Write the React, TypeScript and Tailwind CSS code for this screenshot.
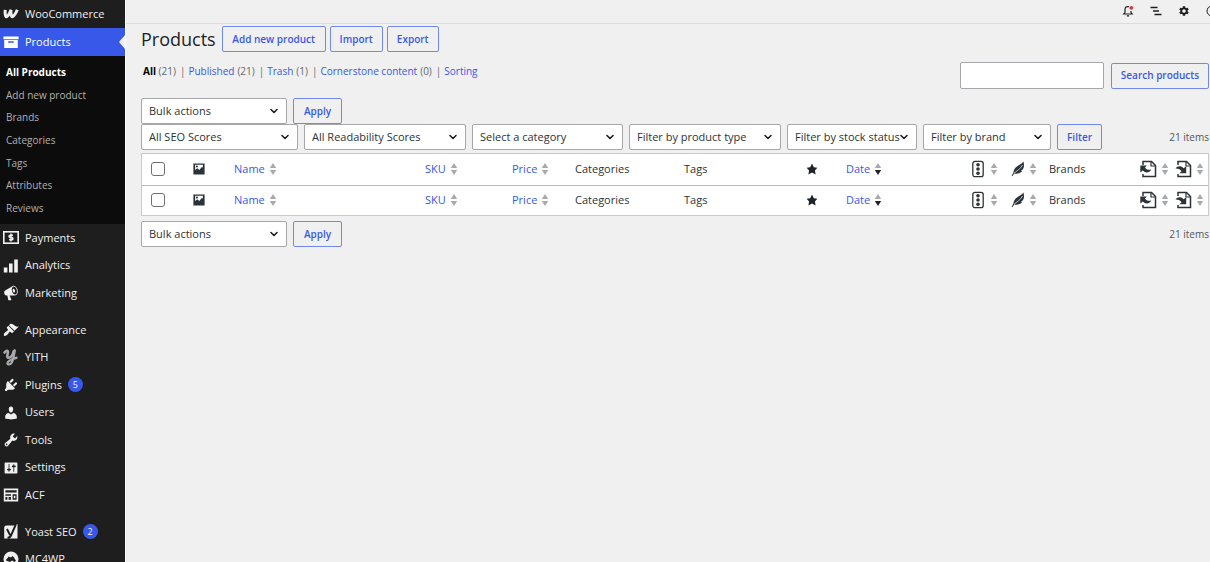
import { useState, type ReactNode } from "react";
import { ChevronDown } from "lucide-react";
import { MdSettings } from "react-icons/md";

type MenuItem = { label: string; icon: ReactNode; badge?: number };

function Dash({ d, size = "size-4" }: { d: string; size?: string }) {
  return (
    <svg viewBox="0 0 20 20" fill="currentColor" className={size} aria-hidden="true">
      <path d={d} fillRule="evenodd" />
    </svg>
  );
}

const ICONS = {
  archive: "M19.500 3v3.500H.5V3zM1.500 7.500h17V17.500h-17zM13.500 11V9h-7v2z",
  chart: "M1 12h4.500v6H1zM7.500 7H12v11H7.500zM14 2h4.500v16H14z",
  megaphone:
    "M18.15 5.94c.46 1.62.38 3.22-.02 4.48-.42 1.28-1.26 2.18-2.3 2.48-.16.06-.26.06-.4.06-.06.02-.12.02-.18.02-.06.02-.14.02-.22.02h-6.8l2.22 5.5c.02.14-.06.26-.14.34-.08.1-.24.16-.34.16H6.95c-.1 0-.26-.06-.34-.16-.08-.08-.16-.2-.14-.34l-1-5.5H4.25l-.02-.02c-.5.06-1.08-.18-1.54-.62s-.88-1.08-1.06-1.88c-.24-.8-.2-1.56-.02-2.2.18-.62.58-1.08 1.06-1.3l.02-.02 9-5.4c.1-.06.18-.1.24-.16.06-.04.14-.08.24-.12.16-.08.28-.12.5-.18 1.04-.3 2.24.1 3.22.98s1.84 2.24 2.26 3.86zm-2.58 5.98h-.02c.4-.1.74-.34 1.04-.7.58-.7.86-1.76.86-3.04 0-.64-.1-1.3-.28-1.98-.34-1.36-1.02-2.5-1.78-3.24s-1.68-1.1-2.46-.88c-.82.22-1.4.96-1.7 2-.32 1.04-.28 2.36.06 3.72.38 1.36 1 2.5 1.8 3.24.78.74 1.62 1.1 2.48.88zm-2.54-7.08c.22-.04.42-.02.62.04.38.16.76.48 1.02 1s.42 1.2.42 1.78c0 .3-.04.56-.12.8-.18.48-.44.84-.86.94-.34.1-.8-.06-1.14-.4s-.64-.86-.78-1.5c-.18-.62-.12-1.24.02-1.72s.48-.84.82-.94z",
  appearance:
    "M14.48 11.06L7.41 3.99l1.5-1.5c.5-.56 2.3-.47 3.51.32 1.21.8 1.43 1.28 2.91 2.1 1.18.64 2.45 1.26 4.45.85zm-.71.71L6.7 4.7 4.93 6.47c-.39.39-.39 1.02 0 1.41l1.06 1.06c.39.39.39 1.03 0 1.42-.6.6-1.43 1.11-2.21 1.69-.35.26-.7.53-1.01.84C1.43 14.23.4 16.08 1.4 17.07c.99 1 2.84-.03 4.18-1.36.31-.31.58-.66.85-1.02.57-.78 1.08-1.61 1.69-2.21.39-.39 1.02-.39 1.41 0l1.06 1.06c.39.39 1.02.39 1.41 0z",
  plugins:
    "M13.11 4.36L9.87 7.6 8 5.73l3.24-3.24c.35-.34 1.05-.2 1.56.32.52.51.66 1.21.31 1.55zm-8 1.77l.91-1.12 9.01 9.01-1.19.84c-.71.71-2.63 1.16-3.82 1.16H6.14L4.9 17.26c-.59.59-1.54.59-2.12 0-.59-.58-.59-1.53 0-2.12l1.24-1.24v-3.88c0-1.13.4-3.19 1.09-3.89zm7.26 3.97l3.24-3.24c.34-.35 1.04-.21 1.55.31.52.51.66 1.21.31 1.55l-3.24 3.25z",
  users:
    "M10 9.25c-2.27 0-2.73-3.44-2.73-3.44C7 4.02 7.82 2 9.97 2c2.16 0 2.98 2.02 2.71 3.81 0 0-.41 3.44-2.68 3.44zm0 2.57L12.72 10c2.39 0 4.52 2.33 4.52 4.53v2.49s-3.65 1.13-7.24 1.13c-3.65 0-7.24-1.13-7.24-1.13v-2.49c0-2.25 1.94-4.48 4.47-4.48z",
  tools:
    "M16.68 9.77c-1.34 1.34-3.3 1.67-4.95.99l-5.41 6.52c-.99.99-2.59.99-3.58 0s-.99-2.59 0-3.57l6.52-5.42c-.68-1.65-.35-3.61.99-4.95 1.28-1.28 3.12-1.62 4.72-1.06l-2.89 2.89 2.82 2.82 2.86-2.87c.53 1.58.18 3.39-1.08 4.65zM3.81 16.21c.4.39 1.04.39 1.43 0 .4-.4.4-1.04 0-1.43-.39-.4-1.03-.4-1.43 0-.39.39-.39 1.03 0 1.43z",
  settings:
    "M18 16V4c0-.55-.45-1-1-1H3c-.55 0-1 .45-1 1v12c0 .55.45 1 1 1h14c.55 0 1-.45 1-1zM8 11h1c.55 0 1 .45 1 1s-.45 1-1 1H8v1.5c0 .28-.22.5-.5.5s-.5-.22-.5-.5V13H6c-.55 0-1-.45-1-1s.45-1 1-1h1V5.5c0-.28.22-.5.5-.5s.5.22.5.5V11zm5-2h-1c-.55 0-1-.45-1-1s.45-1 1-1h1V5.5c0-.28.22-.5.5-.5s.5.22.5.5V7h1c.55 0 1 .45 1 1s-.45 1-1 1h-1v5.5c0 .28-.22.5-.5.5s-.5-.22-.5-.5V9z",
  acf: "M1 2h18v16H1zM3 4v3h14V4zM3 9v2h7V9zM3 12.500v3.500h2.500v-3.500zM7 12.500v3.500h3v-3.500zM12 9v7h5V9zM13.500 11h2v3h-2z",
  star: "M10 1l3 6 6 .75-4.12 4.62L16 19l-6-3-6 3 1.13-6.63L1 7.75 7 7z",
  image: "M2 2h16v16H2zM4.500 4v7.500l3-2.500 3 2.500 3.500-4.500 1.500 1V4zM7 5a1.500 1.500 0 1 1 0 3 1.500 1.500 0 0 1 0-3z",
};

function WooIcon() {
  return (
    <svg viewBox="0 0 16 12" className="h-3 w-4" fill="none" stroke="currentColor" strokeWidth="3" strokeLinejoin="bevel" aria-hidden="true">
      <path d="M2.200 1.800 C1.900 5.500 2.400 8 3.300 9 C5 8.200 6.800 5 8 1.800 C7.700 5.500 8.200 8 9.200 9 C11 8 13 5 14.300 1.800" />
    </svg>
  );
}

function DollarIcon() {
  return (
    <svg viewBox="0 0 16 13" className="h-[13px] w-4" aria-hidden="true">
      <rect x="0.800" y="0.800" width="14.400" height="11.400" fill="none" stroke="currentColor" strokeWidth="1.600" />
      <path d="M10 4.200H7.200a1.150 1.150 0 0 0 0 2.300h1.600a1.150 1.150 0 0 1 0 2.300H6M8 2.600v7.800" fill="none" stroke="currentColor" strokeWidth="1.500" />
    </svg>
  );
}

function YithIcon() {
  return (
    <svg viewBox="0 0 16 18" className="h-[18px] w-4 text-[#a7aaad]" fill="none" stroke="currentColor" strokeLinecap="round" aria-hidden="true">
      <path d="M1.500 4.500C3.500 2 5.500 2.200 4.800 5C4 8.300 4 10 6 9.800C8.300 9.500 10 6 10.800 3" strokeWidth="2.600" />
      <path d="M11.800 2.500C11 7 10.200 12 8.800 14.500C7.600 16.800 4.200 17 4.500 14.800C4.800 12.700 8.500 11.500 13.500 9.800" strokeWidth="2.300" />
    </svg>
  );
}

function YoastIcon() {
  return (
    <svg viewBox="0 0 16 16" className="size-4" aria-hidden="true">
      <path d="M3.500 1.500H12L14.500 0 14.500 14.500H1.200V3.800Q1.200 1.500 3.500 1.500z" fill="currentColor" />
      <path d="M4 5l3 6M12.800 0.500L8 11.500Q7 13.800 4.500 13.800" fill="none" stroke="#1e1e1e" strokeWidth="1.900" />
    </svg>
  );
}

function McIcon() {
  return (
    <svg viewBox="0 0 16 16" className="size-4" aria-hidden="true">
      <circle cx="8" cy="8" r="7.500" fill="currentColor" />
      <path d="M3 9.500C3 7.500 5 7.500 5.500 5.500L8 6.500 9.500 5C11.500 6 11 8 13 9.500L11.500 11 9 9.500 7 11z" fill="#1e1e1e" />
    </svg>
  );
}

const MENU_STORE: MenuItem[] = [
  { label: "Payments", icon: <DollarIcon /> },
  { label: "Analytics", icon: <Dash d={ICONS.chart} /> },
  { label: "Marketing", icon: <Dash d={ICONS.megaphone} /> },
];

const MENU_SITE: MenuItem[] = [
  { label: "Appearance", icon: <Dash d={ICONS.appearance} /> },
  { label: "YITH", icon: <YithIcon /> },
  { label: "Plugins", icon: <Dash d={ICONS.plugins} />, badge: 5 },
  { label: "Users", icon: <Dash d={ICONS.users} /> },
  { label: "Tools", icon: <Dash d={ICONS.tools} /> },
  { label: "Settings", icon: <Dash d={ICONS.settings} /> },
  { label: "ACF", icon: <Dash d={ICONS.acf} /> },
];

const MENU_EXTRA: MenuItem[] = [
  { label: "Yoast SEO", icon: <YoastIcon />, badge: 2 },
  { label: "MC4WP", icon: <McIcon /> },
];

const SUBMENU = ["All Products", "Add new product", "Brands", "Categories", "Tags", "Attributes", "Reviews"];

const VIEWS = [
  { label: "Published", count: 21 },
  { label: "Trash", count: 1 },
  { label: "Cornerstone content", count: 0 },
];

function MenuGroup({ items, className }: { items: MenuItem[]; className: string }) {
  return (
    <ul className={`flex flex-col ${className}`}>
      {items.map((m) => (
        <li key={m.label} className="flex flex-1">
          <a href="#" className="flex flex-1 items-center gap-1.5 pl-[3px]">
            <span className="flex w-4 shrink-0 justify-center">{m.icon}</span>
            <span>{m.label}</span>
            {m.badge && (
              <span className="flex size-[15px] items-center justify-center rounded-full bg-[#3858e9] text-[9px]">{m.badge}</span>
            )}
          </a>
        </li>
      ))}
    </ul>
  );
}

function Sidebar() {
  return (
    <nav className="w-[125px] shrink-0 overflow-hidden bg-[#1e1e1e] text-[11px] text-[#f0f0f1]" aria-label="Main menu">
      <a href="#" className="flex h-7 items-center gap-1.5 pl-[3px]">
        <WooIcon />
        WooCommerce
      </a>
      <a href="#" className="relative flex h-7 items-center gap-1.5 bg-[#3858e9] pl-[3px] text-white">
        <Dash d={ICONS.archive} />
        Products
        <svg viewBox="0 0 6 14" className="absolute right-0 h-3.5 w-1.5 fill-[#f0f0f0]" aria-hidden="true">
          <path d="M6 0v14L0 7z" />
        </svg>
      </a>
      <ul className="flex h-[168px] flex-col bg-[#0c0c0c] pt-[5px] pb-1 text-[10px] text-[#b0b0b1]">
        {SUBMENU.map((s, i) => (
          <li key={s} className="flex flex-1">
            <a href="#" className={i === 0 ? "flex flex-1 items-center pl-1.5 font-bold text-white" : "flex flex-1 items-center pl-1.5"}>
              {s}
            </a>
          </li>
        ))}
      </ul>
      <MenuGroup items={MENU_STORE} className="h-[83px]" />
      <MenuGroup items={MENU_SITE} className="mt-[9px] h-[193px]" />
      <MenuGroup items={MENU_EXTRA} className="mt-[9px] h-[55px]" />
    </nav>
  );
}

function Button({ children, className = "" }: { children: ReactNode; className?: string }) {
  return (
    <button
      type="button"
      className={`h-[26px] shrink-0 rounded-[2px] border border-[#7189ee] text-[10px] font-semibold text-[#3858e9] ${className}`}
    >
      {children}
    </button>
  );
}

function Select({ label, className }: { label: string; className: string }) {
  return (
    <div className={`relative shrink-0 ${className}`}>
      <select
        aria-label={label}
        className="h-[26px] w-full appearance-none rounded-[2px] border border-[#a5a7aa] bg-white pl-[7px] text-[11px] text-[#2c3338]"
      >
        <option>{label}</option>
      </select>
      <ChevronDown className="pointer-events-none absolute top-[7px] right-[7px] size-3 text-[#1e1e1e]" strokeWidth={3.2} />
    </div>
  );
}

function Sorter({ active = false }: { active?: boolean }) {
  return (
    <svg viewBox="0 0 8 12" className="h-3 w-2 shrink-0" aria-hidden="true">
      <path d="M4 0l3.200 5H0.800z" fill="#a7aaad" />
      <path d="M4 12l3.200-5H0.800z" fill={active ? "#1d2327" : "#a7aaad"} />
    </svg>
  );
}

function SortLink({ children, label, active }: { children: ReactNode; label?: string; active?: boolean }) {
  return (
    <a href="#" aria-label={label} className="flex items-center gap-1 text-[#3858e9]">
      {children}
      <Sorter active={active} />
    </a>
  );
}

function SeoIcon() {
  return (
    <svg viewBox="0 0 12 18" className="mr-0.5 h-[18px] w-3 shrink-0 text-[#2c3338]" aria-hidden="true">
      <rect x="0.800" y="1.300" width="10.400" height="15.400" rx="2.200" fill="none" stroke="currentColor" strokeWidth="1.300" />
      <g fill="currentColor">
        <circle cx="6" cy="4.800" r="1.800" />
        <circle cx="6" cy="9" r="1.800" />
        <circle cx="6" cy="13.200" r="1.800" />
      </g>
    </svg>
  );
}

function FeatherIcon() {
  return (
    <svg viewBox="0 0 14 16" className="h-4 w-3.5 shrink-0 text-[#2c3338]" aria-hidden="true">
      <path d="M12.300 0.500C10.500 3.800 5.500 4.500 3.300 8.500c-.8 1.300-.7 2.300-.9 3.200L0.600 14.800l.7.500L3.200 12.600c3.300.6 6.300-.4 8-2.600l-1.300-.2 2-1.500C13.300 6 13.300 3 12.300 .5z" fill="currentColor" />
      <path d="M3 12.300C5.500 10 9.500 8 11.600 4" fill="none" stroke="#fff" strokeWidth="0.700" />
    </svg>
  );
}

function LinkPageIcon({ incoming = false }: { incoming?: boolean }) {
  return (
    <svg viewBox="0 0 17 18" className="h-[18px] w-[17px] shrink-0 text-[#2c3338]" aria-hidden="true">
      <path d="M3 5V1.500h8.500l4 4v11H3V14" fill="none" stroke="currentColor" strokeWidth="1.500" />
      <path d="M11 1.500V6h4.500" fill="none" stroke="currentColor" strokeWidth="1.200" />
      {incoming ? (
        <path d="M0.500 8.500C2.500 5.800 6 5.600 8.600 8.200L11.200 6.200v7H4.400l2.200-2C4.800 8.800 2.500 8.300 0.500 8.500z" fill="currentColor" />
      ) : (
        <path d="M0.300 5.500h6.500L5 7.500c1.300 2.200 3.800 3 6.400 1.800-1.500 3.600-5.800 4.300-8.600 1.200L0.300 12.500z" fill="currentColor" />
      )}
    </svg>
  );
}

function HeadRow({ id, className }: { id: string; className: string }) {
  return (
    <tr className={className}>
      <td className="pl-[9px]">
        <input
          id={id}
          type="checkbox"
          aria-label="Select all"
          className="block size-3.5 appearance-none rounded-[3px] border border-[#6c7075] bg-white checked:bg-[#3858e9]"
        />
      </td>
      <th aria-label="Image">
        <span className="block text-[#2c3338]">
          <Dash d={ICONS.image} size="size-3.5" />
        </span>
      </th>
      <th><SortLink>Name</SortLink></th>
      <th><SortLink>SKU</SortLink></th>
      <th><SortLink>Price</SortLink></th>
      <th>Categories</th>
      <th>Tags</th>
      <th aria-label="Featured">
        <span className="block text-[#1d2327]">
          <Dash d={ICONS.star} size="size-3" />
        </span>
      </th>
      <th><SortLink active>Date</SortLink></th>
      <th><SortLink label="SEO score"><SeoIcon /></SortLink></th>
      <th><SortLink label="Readability score"><FeatherIcon /></SortLink></th>
      <th>Brands</th>
      <th><SortLink label="Outgoing internal links"><LinkPageIcon /></SortLink></th>
      <th><SortLink label="Received internal links"><LinkPageIcon incoming /></SortLink></th>
    </tr>
  );
}

function ProductsTable() {
  return (
    <div className="border border-[#c9cacc] bg-white">
      <table className="w-full table-fixed border-collapse text-left text-[11px] text-[#2c3338] [&_th]:font-normal">
        <colgroup>
          <col className="w-[50px]" />
          <col className="w-[42px]" />
          <col />
          <col className="w-[87px]" />
          <col className="w-[63px]" />
          <col className="w-[109px]" />
          <col className="w-[122px]" />
          <col className="w-10" />
          <col className="w-[126px]" />
          <col className="w-[39px]" />
          <col className="w-[38px]" />
          <col className="w-[91px]" />
          <col className="w-[35px]" />
          <col className="w-[33px]" />
        </colgroup>
        <thead className="border-b border-[#b9babd]">
          <HeadRow id="select-all-top" className="h-[31px]" />
        </thead>
        <tfoot>
          <HeadRow id="select-all-bottom" className="h-[30px]" />
        </tfoot>
      </table>
    </div>
  );
}

function TopBar() {
  return (
    <header className="flex h-6 shrink-0 items-center justify-end gap-4 overflow-hidden border-b border-[#dcdcde] pb-0.5 text-[#1e1e1e]">
      <button type="button" aria-label="Activity">
        <svg viewBox="0 0 12 12" className="block size-3" fill="none" stroke="currentColor" strokeWidth="1.200" aria-hidden="true">
          <path d="M7 1.800C4.500 1 3 2.500 3 4.500v3L1.800 9h8.400L9 7.500V6M4.800 10.800h2.400" />
          <circle cx="9.300" cy="2.800" r="1.900" fill="#d63638" stroke="none" />
        </svg>
      </button>
      <button type="button" aria-label="Setup">
        <svg viewBox="0 0 12 10" className="block h-2.5 w-3" stroke="currentColor" strokeWidth="1.300" aria-hidden="true">
          <path d="M0.500 1.500h7M3 5h6M4.500 8.500h7" />
        </svg>
      </button>
      <button type="button" aria-label="Settings">
        <MdSettings className="block size-3" />
      </button>
      <button type="button" aria-label="Help" className="-mr-2">
        <svg viewBox="0 0 12 12" className="block size-3" fill="none" stroke="currentColor" aria-hidden="true">
          <circle cx="6" cy="6" r="5" />
        </svg>
      </button>
    </header>
  );
}

export default function App() {
  const [query, setQuery] = useState("");

  return (
    <div className="flex h-screen overflow-hidden bg-[#f0f0f0] font-['Open_Sans',sans-serif] text-[11px]">
      <Sidebar />

      <main className="flex min-w-0 flex-1 flex-col border-l border-white">
        <TopBar />

        <div className="pt-0.5 pr-px pl-[15px]">
          <div className="flex items-center gap-1">
            <h1 className="mr-0.5 text-[18px] leading-6 text-[#1d2327]">Products</h1>
            <Button className="w-[104px]">Add new product</Button>
            <Button className="w-[53px]">Import</Button>
            <Button className="w-[52px]">Export</Button>
          </div>

          <div className="flex justify-between">
            <ul className="mt-[11px] flex gap-1 pl-0.5 text-[10px] leading-4 text-[#646970]">
              <li>
                <a href="#" className="font-bold text-black">All</a> (21)
              </li>
              {VIEWS.map((v) => (
                <li key={v.label} className="flex gap-[3px]">
                  <span>|</span>
                  <a href="#" className="text-[#3858e9]">{v.label}</a>
                  <span>({v.count})</span>
                </li>
              ))}
              <li className="flex gap-[3px]">
                <span>|</span>
                <a href="#" className="text-[#3858e9]">Sorting</a>
              </li>
            </ul>
            <div className="mt-2.5 flex items-center gap-[7px]">
              <input
                type="search"
                aria-label="Search products"
                value={query}
                onChange={(e) => setQuery(e.target.value)}
                className="h-[27px] w-36 rounded-[2px] border border-[#a5a7aa] bg-white px-2"
              />
              <Button className="w-[98px]">Search products</Button>
            </div>
          </div>

          <div className="mt-[9px] flex gap-1.5">
            <Select label="Bulk actions" className="w-[146px]" />
            <Button className="w-[49px]">Apply</Button>
          </div>
          <div className="flex items-center gap-1.5">
            <Select label="All SEO Scores" className="w-[157px]" />
            <Select label="All Readability Scores" className="w-[162px]" />
            <Select label="Select a category" className="w-[151px]" />
            <Select label="Filter by product type" className="w-[152px]" />
            <Select label="Filter by stock status" className="w-[130px]" />
            <Select label="Filter by brand" className="w-[128px]" />
            <Button className="w-[45px]">Filter</Button>
            <span className="ml-auto text-[10px] text-[#50575e]">21 items</span>
          </div>

          <div className="mt-[3px] mb-[5px]">
            <ProductsTable />
          </div>

          <div className="flex items-center gap-1.5">
            <Select label="Bulk actions" className="w-[146px]" />
            <Button className="w-[49px]">Apply</Button>
            <span className="ml-auto text-[10px] text-[#50575e]">21 items</span>
          </div>
        </div>
      </main>
    </div>
  );
}
